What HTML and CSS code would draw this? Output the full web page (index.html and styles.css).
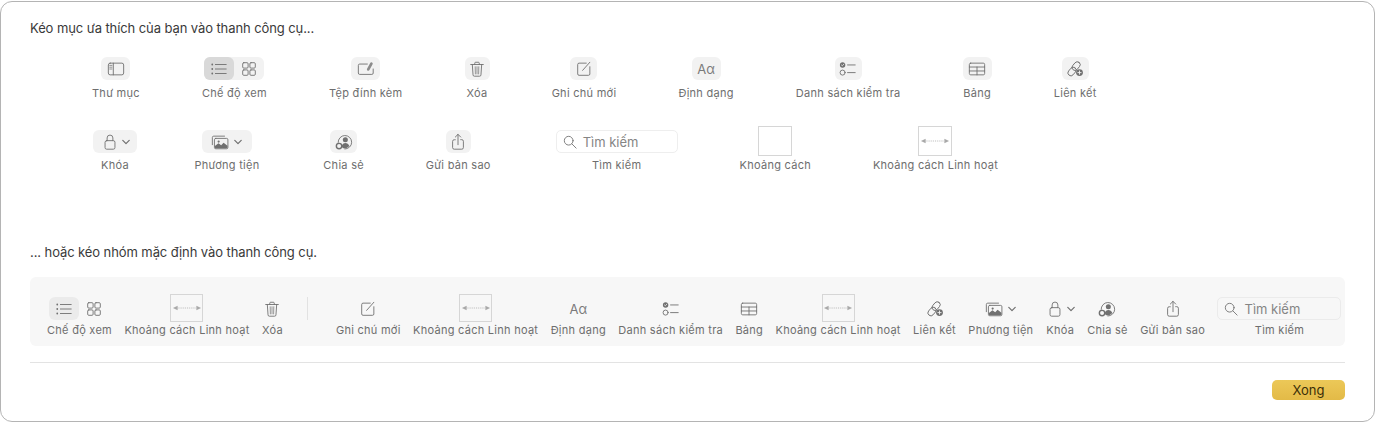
FILE: index.html
```html
<!DOCTYPE html>
<html lang="vi">
<head>
<meta charset="UTF-8"><meta name="viewport" content="width=device-width,initial-scale=1.0">
<title>Tùy chỉnh thanh công cụ</title>
<link rel="stylesheet" href="styles.css">
</head>
<body>

<!-- shared toolbar icons -->
<svg class="defs" aria-hidden="true">
  <symbol id="i-folder" viewBox="0 0 20 20"><rect x="1.500" y="3.500" width="17" height="13" rx="2"/><path d="M7 3.500v13"/><path d="M3 6h2.500M3 8h2.500M3 10h2.500" stroke-width=".8"/></symbol>
  <symbol id="i-list" viewBox="0 0 20 20"><path d="M6 5h12M6 10h12M6 15h12"/><circle class="fill" cx="2.500" cy="5" r="1"/><circle class="fill" cx="2.500" cy="10" r="1"/><circle class="fill" cx="2.500" cy="15" r="1"/></symbol>
  <symbol id="i-grid" viewBox="0 0 20 20"><rect x="3" y="3" width="6" height="6" rx="1.200"/><rect x="11" y="3" width="6" height="6" rx="1.200"/><rect x="3" y="11" width="6" height="6" rx="1.200"/><rect x="11" y="11" width="6" height="6" rx="1.200"/></symbol>
  <symbol id="i-attach" viewBox="0 0 20 20"><path d="M11.500 4.500H3A1.500 1.500 0 0 0 1.500 6v8.500A1.500 1.500 0 0 0 3 16h13.500a1.500 1.500 0 0 0 1.500-1.500V10"/><path d="M12.500 10.500l3.500-6.500" stroke-width="3" stroke-linecap="round" opacity=".8"/></symbol>
  <symbol id="i-trash" viewBox="0 0 20 20"><path d="M3 5h14M7.500 5V3.500A1 1 0 0 1 8.500 2.500h3a1 1 0 0 1 1 1V5"/><path d="M4.800 5l.8 11.500A1.500 1.500 0 0 0 7.100 18h5.800a1.500 1.500 0 0 0 1.500-1.500L15.200 5"/><path d="M8 7.500l.2 8M10 7.500v8M12 7.500l-.2 8" stroke-width=".8"/></symbol>
  <symbol id="i-note" viewBox="0 0 20 20"><path d="M12.500 3.500H4.500A1.500 1.500 0 0 0 3 5v10.500A1.500 1.500 0 0 0 4.500 17H15a1.500 1.500 0 0 0 1.500-1.500V7.500"/><path d="M8.500 11.500L16.500 2.500"/></symbol>
  <symbol id="i-check" viewBox="0 0 20 20"><circle class="fill" cx="4" cy="5.500" r="3"/><path d="M2.700 5.500l1 1 1.700-2" stroke="#f2f2f2" stroke-width=".9"/><circle cx="4" cy="14" r="2.800"/><path d="M9.500 5.500H18M9.500 14H18"/></symbol>
  <symbol id="i-table" viewBox="0 0 20 20"><rect x="1.500" y="3.500" width="17" height="13" rx="1.500"/><path d="M1.500 7.800h17M1.500 12.200h17M10 7.800v8.700"/></symbol>
  <symbol id="i-link" viewBox="0 0 20 20"><rect x="8" y="1.500" width="6.500" height="10.500" rx="3.200" transform="rotate(40 11.200 6.700)"/><rect x="3.500" y="7.500" width="6.500" height="10.500" rx="3.200" transform="rotate(40 6.700 12.700)"/><circle class="fill" cx="15" cy="14" r="3.800"/><path d="M13.200 14h3.600M15 12.200v3.600" stroke="#f2f2f2"/></symbol>
  <symbol id="i-lock" viewBox="0 0 20 20"><rect x="4.500" y="8.500" width="11" height="9.500" rx="1.800"/><path d="M6.800 8.500V5.500a3.200 3.200 0 0 1 6.400 0v3"/></symbol>
  <symbol id="i-media" viewBox="0 0 20 20"><path d="M1.500 13V5A1.500 1.500 0 0 1 3 3.500h12"/><rect x="3.800" y="6" width="15" height="11.500" rx="1.500"/><path class="fill" d="M4.300 17v-2.500l4-3 3 2 2.700-2.800 4.300 3.500V17z"/><circle class="fill" cx="8.500" cy="9.500" r="1.200"/></symbol>
  <symbol id="i-collab" viewBox="0 0 20 20"><path d="M3.500 10.500A7.500 7.500 0 1 1 11 17.800"/><circle class="fill" cx="11.500" cy="7.500" r="2.800"/><path class="fill" d="M7.500 14.500c.6-2.200 2.200-3.300 4-3.300s3.700 1.100 4.400 3.300a7 7 0 0 1-7.400 2.300z"/><circle cx="4.500" cy="14.500" r="3" stroke-width="1.600"/></symbol>
  <symbol id="i-send" viewBox="0 0 20 20"><path d="M7 7.500H5.800A1.800 1.800 0 0 0 4 9.300v7A1.800 1.800 0 0 0 5.800 18h8.400a1.800 1.800 0 0 0 1.800-1.800v-7a1.800 1.800 0 0 0-1.800-1.800H13"/><path d="M10 13V1.500M7 4.500l3-3 3 3"/></symbol>
  <symbol id="i-search" viewBox="0 0 16 16"><circle cx="6.500" cy="6.500" r="5"/><path d="M10.200 10.200L15 15"/></symbol>
  <symbol id="i-chev" viewBox="0 0 10 10"><path d="M1 3l4 4 4-4" stroke-width="1.500"/></symbol>
  <symbol id="i-arrows" viewBox="0 0 32 10"><path class="dots" d="M6 5h20"/><path class="fill arrow" d="M1 5l5-2.500v5zM31 5l-5-2.500v5z"/></symbol>
</svg>

<main class="window">
  <p class="hint">Kéo mục ưa thích của bạn vào thanh công cụ...</p>

  <section class="palette">
    <div class="row row-one">
      <div class="item"><div class="tile"><svg class="ic"><use href="#i-folder"/></svg></div><span class="lbl">Thư mục</span></div>
      <div class="item"><div class="seg"><div class="tile on"><svg class="ic"><use href="#i-list"/></svg></div><div class="tile"><svg class="ic"><use href="#i-grid"/></svg></div></div><span class="lbl">Chế độ xem</span></div>
      <div class="item"><div class="tile"><svg class="ic"><use href="#i-attach"/></svg></div><span class="lbl">Tệp đính kèm</span></div>
      <div class="item"><div class="tile narrow"><svg class="ic"><use href="#i-trash"/></svg></div><span class="lbl">Xóa</span></div>
      <div class="item"><div class="tile mid"><svg class="ic"><use href="#i-note"/></svg></div><span class="lbl">Ghi chú mới</span></div>
      <div class="item"><div class="tile"><span class="aa">Aα</span></div><span class="lbl">Định dạng</span></div>
      <div class="item"><div class="tile mid"><svg class="ic"><use href="#i-check"/></svg></div><span class="lbl">Danh sách kiểm tra</span></div>
      <div class="item"><div class="tile"><svg class="ic"><use href="#i-table"/></svg></div><span class="lbl">Bảng</span></div>
      <div class="item"><div class="tile mid"><svg class="ic"><use href="#i-link"/></svg></div><span class="lbl">Liên kết</span></div>
    </div>
    <div class="row row-two">
      <div class="item pull"><div class="tile lock"><svg class="ic"><use href="#i-lock"/></svg><svg class="chev"><use href="#i-chev"/></svg></div><span class="lbl">Khóa</span></div>
      <div class="item push"><div class="tile media"><svg class="ic"><use href="#i-media"/></svg><svg class="chev"><use href="#i-chev"/></svg></div><span class="lbl">Phương tiện</span></div>
      <div class="item"><div class="tile mid"><svg class="ic"><use href="#i-collab"/></svg></div><span class="lbl">Chia sẻ</span></div>
      <div class="item"><div class="tile narrow"><svg class="ic"><use href="#i-send"/></svg></div><span class="lbl">Gửi bản sao</span></div>
      <div class="item field"><div class="search"><svg class="mag"><use href="#i-search"/></svg><span>Tìm kiếm</span></div><span class="lbl">Tìm kiếm</span></div>
      <div class="item"><div class="space"></div><span class="lbl">Khoảng cách</span></div>
      <div class="item"><div class="space"><svg class="arrows"><use href="#i-arrows"/></svg></div><span class="lbl">Khoảng cách Linh hoạt</span></div>
    </div>
  </section>

  <p class="hint hint-two">... hoặc kéo nhóm mặc định vào thanh công cụ.</p>

  <section class="toolbar">
    <div class="item"><div class="seg"><div class="tile on"><svg class="ic"><use href="#i-list"/></svg></div><div class="tile"><svg class="ic"><use href="#i-grid"/></svg></div></div><span class="lbl">Chế độ xem</span></div>
    <div class="item"><div class="space"><svg class="arrows"><use href="#i-arrows"/></svg></div><span class="lbl">Khoảng cách Linh hoạt</span></div>
    <div class="item"><div class="tile"><svg class="ic"><use href="#i-trash"/></svg></div><span class="lbl">Xóa</span></div>
    <div class="divider"></div>
    <div class="item"><div class="tile"><svg class="ic"><use href="#i-note"/></svg></div><span class="lbl">Ghi chú mới</span></div>
    <div class="item"><div class="space"><svg class="arrows"><use href="#i-arrows"/></svg></div><span class="lbl">Khoảng cách Linh hoạt</span></div>
    <div class="item"><div class="tile"><span class="aa">Aα</span></div><span class="lbl">Định dạng</span></div>
    <div class="item"><div class="tile"><svg class="ic"><use href="#i-check"/></svg></div><span class="lbl">Danh sách kiểm tra</span></div>
    <div class="item"><div class="tile"><svg class="ic"><use href="#i-table"/></svg></div><span class="lbl">Bảng</span></div>
    <div class="item"><div class="space"><svg class="arrows"><use href="#i-arrows"/></svg></div><span class="lbl">Khoảng cách Linh hoạt</span></div>
    <div class="item"><div class="tile"><svg class="ic"><use href="#i-link"/></svg></div><span class="lbl">Liên kết</span></div>
    <div class="item"><div class="tile media"><svg class="ic"><use href="#i-media"/></svg><svg class="chev"><use href="#i-chev"/></svg></div><span class="lbl">Phương tiện</span></div>
    <div class="item"><div class="tile lock"><svg class="ic"><use href="#i-lock"/></svg><svg class="chev"><use href="#i-chev"/></svg></div><span class="lbl">Khóa</span></div>
    <div class="item"><div class="tile"><svg class="ic"><use href="#i-collab"/></svg></div><span class="lbl">Chia sẻ</span></div>
    <div class="item"><div class="tile"><svg class="ic"><use href="#i-send"/></svg></div><span class="lbl">Gửi bản sao</span></div>
    <div class="item"><div class="search"><svg class="mag"><use href="#i-search"/></svg><span>Tìm kiếm</span></div><span class="lbl">Tìm kiếm</span></div>
  </section>

  <hr class="rule">

  <div class="actions"><button class="done">Xong</button></div>
</main>
</body>
</html>
```

FILE: styles.css
```css
:root{--ink:#2b2b2b;--muted:#6e6e6e;--icon:#707070;--tile:#f2f2f2;--on:#d9d9d9;--line:#e3e3e3}
*{box-sizing:border-box}
body{margin:0;background:#fff;font-family:'Inter','Liberation Sans',sans-serif;color:var(--ink)}
.defs{position:absolute;width:0;height:0}

.window{height:421px;margin-top:1px;padding:18px 29px 0;border:1px solid #b4b4b4;border-radius:12px;background:#fff}
.hint{margin:0;font-size:13px;line-height:16px;letter-spacing:-.09px;color:#3a3a3a}
.hint-two{margin-top:71px}

/* palette of draggable items */
.palette{margin-top:21px;height:116px;padding-left:62px}
.row{display:flex}
.row-one{gap:62.1px}
.row-two{gap:61.9px;margin-top:30px;padding-left:1px}
.row-two .lbl{margin-top:5px}
.row-two .pull{margin-right:-4.5px}
.row-two .push{margin-right:2px}
.row-two .field{margin-left:3px}

.item{display:flex;flex-direction:column;align-items:center;flex-shrink:0}
.lbl{margin-top:6px;font-size:11px;line-height:14px;letter-spacing:.27px;color:var(--muted);white-space:nowrap}

.tile{display:flex;align-items:center;justify-content:center;gap:3px;width:29px;height:23px;border-radius:6px;background:var(--tile)}
.tile.narrow{width:25px}
.tile.mid{width:27px}
.tile.lock{width:44px}
.tile.media{width:50px;gap:5px}
.seg{display:flex;border-radius:6px;background:var(--tile)}
.seg .tile{width:30px;background:none}
.seg .tile.on{background:var(--on)}

.ic,.chev,.mag,.arrows{fill:none;stroke:var(--icon);stroke-width:1;stroke-linecap:round;stroke-linejoin:round;flex-shrink:0}
.ic{width:18px;height:18px}
.chev{width:8px;height:8px}
.mag{width:14px;height:14px}
.arrows{width:30px;height:10px}
symbol .fill{fill:var(--icon);stroke:none}
symbol .dots{stroke:#b5b5b5;stroke-dasharray:1 1;stroke-linecap:butt}
symbol .arrow{fill:#a9a9a9}
.aa{font-size:13px;color:#7a7a7a}

.search{display:flex;align-items:center;gap:6px;width:122px;height:23px;padding-left:6px;border:1px solid #eee;border-radius:5px;background:#fff;font-size:13px;color:#858585}
.space{display:flex;align-items:center;justify-content:center;width:34px;height:30px;margin:-4px 0 -3px;border:1px solid #d6d6d6;background:#fff}

/* default set */
.toolbar{display:flex;gap:12.4px;height:69px;margin-top:17px;padding:20px 0 0 17px;border-radius:6px;background:#f7f7f7}
.toolbar .tile{width:auto;min-width:20px;background:none}
.toolbar .tile.on{background:#ebebeb}
.toolbar .seg{background:none}
.toolbar .seg .tile{width:30px}
.toolbar .space{width:33px;height:28px;margin:-3px 0 -2px;background:none}
.toolbar .search{width:124px;border-color:#ebebeb;background:#f7f7f7}
.toolbar .lbl{margin-top:3px}
.divider{width:1px;height:23px;margin:0 16px 0 11.3px;background:#e2e2e2}

.rule{height:1px;margin:16px 0 0;border:0;background:var(--line)}
.actions{display:flex;justify-content:flex-end;margin-top:17px}
.done{width:73px;height:20px;padding:0;border:0;border-radius:5px;background:linear-gradient(#ecc858,#e3ba47);font:13px 'Inter','Liberation Sans',sans-serif;color:#3b2f08}
```
